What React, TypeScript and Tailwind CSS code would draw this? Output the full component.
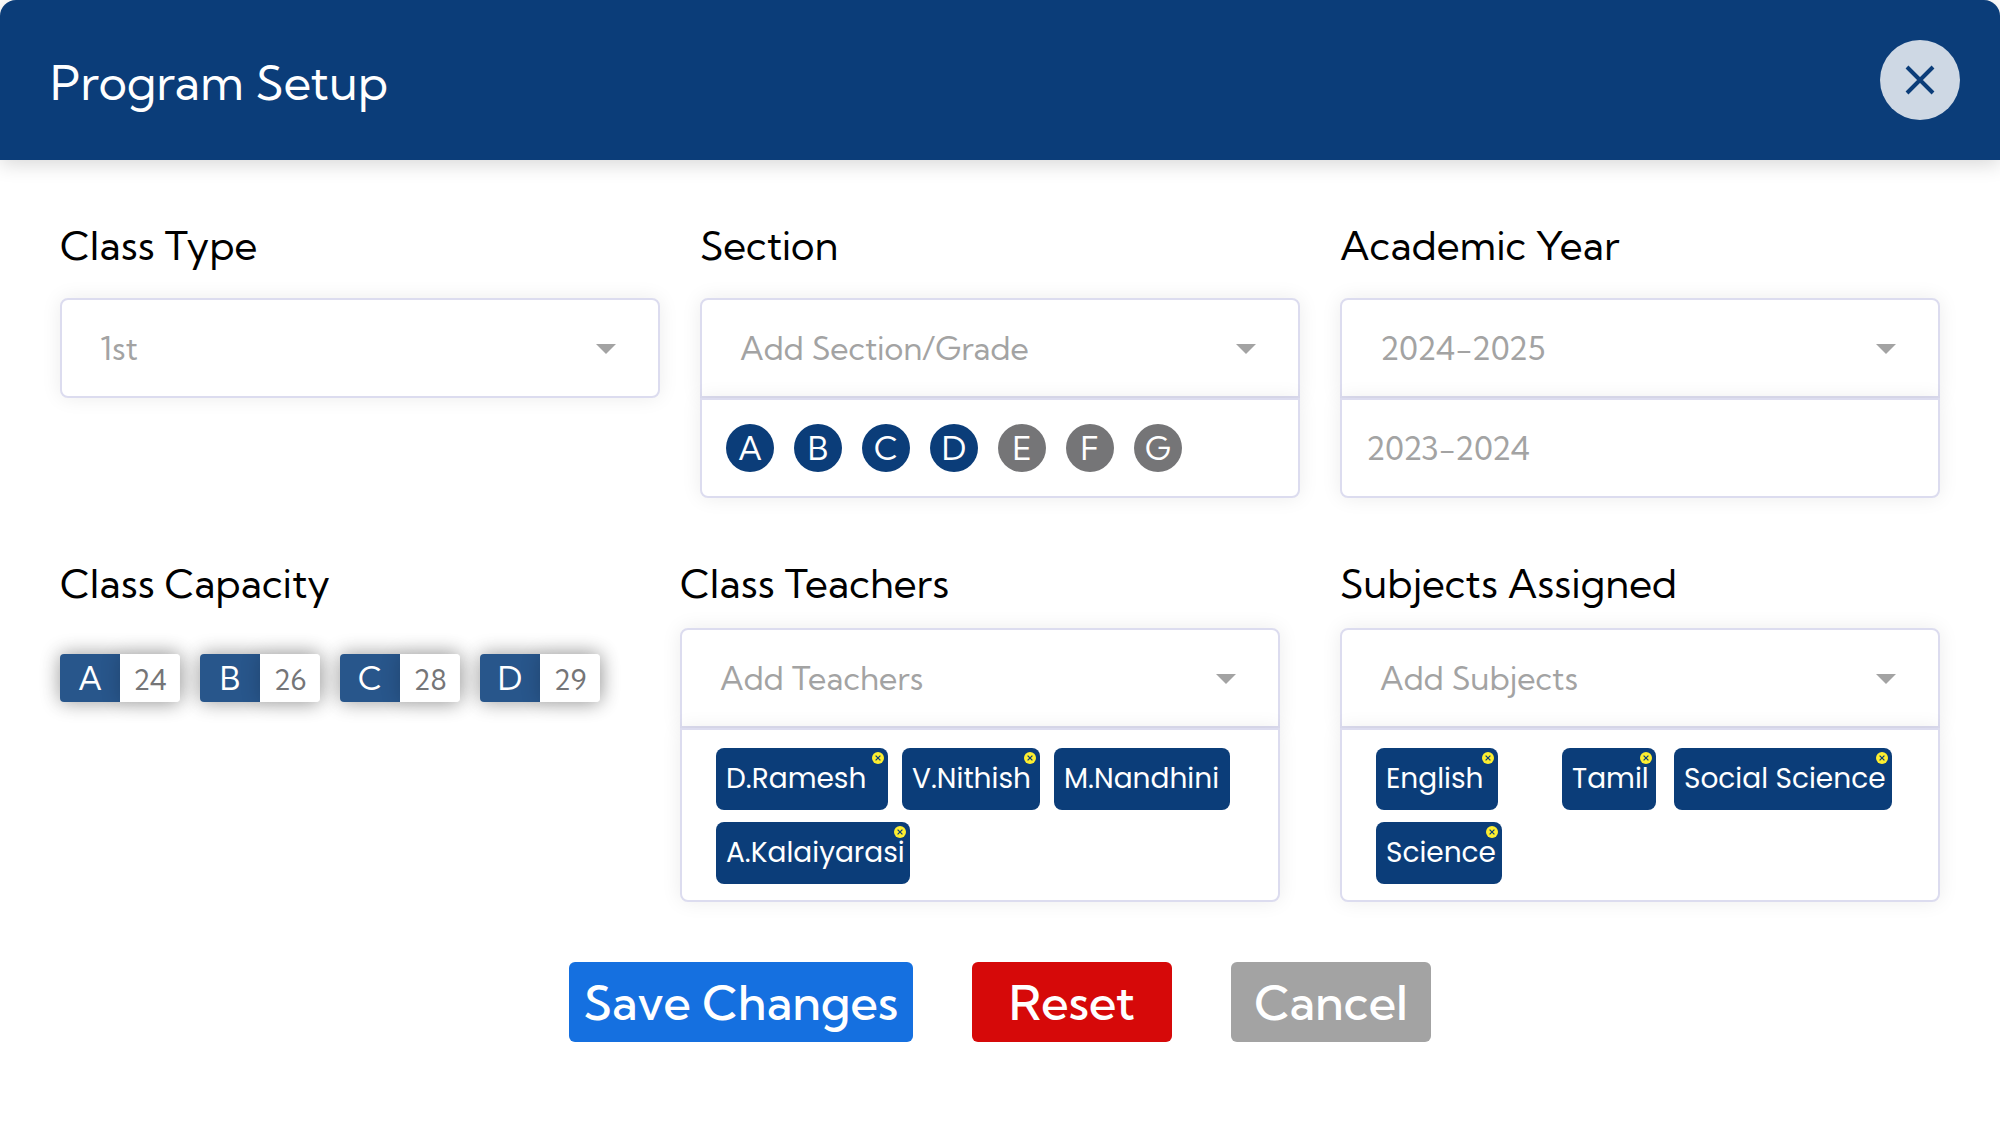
import { useId, type ReactNode } from "react";

const sections = [
  { name: "A", active: true },
  { name: "B", active: true },
  { name: "C", active: true },
  { name: "D", active: true },
  { name: "E", active: false },
  { name: "F", active: false },
  { name: "G", active: false },
];

const capacities = [
  { name: "A", seats: 24 },
  { name: "B", seats: 26 },
  { name: "C", seats: 28 },
  { name: "D", seats: 29 },
];

function Field({
  label,
  value,
  labelGap,
  children,
}: {
  label: string;
  value: string;
  labelGap: string;
  children?: ReactNode;
}) {
  const id = useId();
  return (
    <div>
      <label htmlFor={id} className={`block text-[40px] leading-12 text-black ${labelGap}`}>
        {label}
      </label>
      <div className="relative">
        <select
          id={id}
          className={`block h-[100px] w-full appearance-none border-2 border-[#dcdcef] bg-white pr-20 pl-[38px] text-[32px] text-[#a3a3a3] shadow-[0_0_20px_rgba(0,0,0,0.08)] ${
            children ? "rounded-t-lg" : "rounded-lg"
          }`}
        >
          <option>{value}</option>
        </select>
        <svg
          viewBox="0 0 20 10"
          className="pointer-events-none absolute top-[46px] right-11 h-[10px] w-5 fill-[#a3a3a3]"
          aria-hidden="true"
        >
          <path d="M0 0h20L10 10z" />
        </svg>
      </div>
      {children && (
        <div className="relative rounded-b-lg border-2 border-[#dcdcef] bg-white shadow-[0_0_20px_rgba(0,0,0,0.08)]">
          {children}
        </div>
      )}
    </div>
  );
}

function Chip({ name, width, removable = true }: { name: string; width: string; removable?: boolean }) {
  return (
    <li
      className={`relative flex h-[62px] items-center rounded-lg bg-[#0b3d79] pl-[10px] text-[28px] whitespace-nowrap text-white ${width}`}
    >
      <span className="font-['Poppins',Inter,sans-serif]">{name}</span>
      {removable && (
        <button type="button" aria-label={`Remove ${name}`} className="absolute top-1 right-1 size-3">
          <svg viewBox="0 0 12 12" className="size-3" aria-hidden="true">
            <circle cx="6" cy="6" r="6" fill="#fdee30" />
            <path d="M3.6 3.6l4.8 4.8M8.4 3.6L3.6 8.4" stroke="#0b3d79" strokeWidth="1.2" />
          </svg>
        </button>
      )}
    </li>
  );
}

export default function App() {
  return (
    <div className="min-h-screen bg-white font-['Kumbh_Sans',Lato,sans-serif]">
      <header className="flex h-40 items-center justify-between rounded-t-2xl bg-[#0b3d79] pr-10 pl-[50px] shadow-[0_4px_20px_rgba(0,0,0,0.16)]">
        <h1 className="pt-[6px] text-5xl leading-14 text-white">Program Setup</h1>
        <button
          type="button"
          aria-label="Close"
          className="flex size-20 items-center justify-center rounded-full bg-[#ced8e4]"
        >
          <svg viewBox="0 0 30 30" className="size-[30px]" aria-hidden="true">
            <path d="M2 2l26 26M28 2L2 28" stroke="#0b3d79" strokeWidth="4" />
          </svg>
        </button>
      </header>

      <form className="px-[60px] pt-[62px]" onSubmit={(e) => e.preventDefault()}>
        <div className="grid grid-cols-3 gap-10">
          <Field label="Class Type" value="1st" labelGap="mb-7" />
          <Field label="Section" value="Add Section/Grade" labelGap="mb-7">
            <div className="flex h-24 items-center gap-5 px-6">
              {sections.map((s) => (
                <button
                  key={s.name}
                  type="button"
                  aria-pressed={s.active}
                  className={`size-12 rounded-full text-[32px] leading-12 text-white ${
                    s.active ? "bg-[#0b3d79]" : "bg-[#757577]"
                  }`}
                >
                  {s.name}
                </button>
              ))}
            </div>
          </Field>
          <Field label="Academic Year" value="2024-2025" labelGap="mb-7">
            <button type="button" className="block h-24 w-full px-6 text-left text-[32px] text-[#a3a3a3]">
              2023-2024
            </button>
          </Field>
        </div>

        <div className="mt-[62px] flex">
          <section className="mr-5 flex-1">
            <h2 className="text-[40px] leading-12 text-black">Class Capacity</h2>
            <ul className="mt-[46px] flex gap-5">
              {capacities.map((c) => (
                <li
                  key={c.name}
                  className="flex h-12 w-[120px] rounded text-center shadow-[0_0_20px_rgba(0,0,0,0.3)]"
                >
                  <span className="flex-1 rounded-l bg-[#28568b] text-[32px] leading-12 text-white shadow-[0_0_20px_rgba(0,0,0,0.12)]">
                    {c.name}
                  </span>
                  <span className="flex-1 rounded-r bg-white text-[28px] leading-[52px] text-[#757577] shadow-[0_0_20px_rgba(0,0,0,0.2)]">
                    {c.seats}
                  </span>
                </li>
              ))}
            </ul>
          </section>
          <div className="mr-[60px] flex-1">
            <Field label="Class Teachers" value="Add Teachers" labelGap="mb-5">
              <ul className="flex flex-wrap gap-x-[14px] gap-y-3 px-[34px] pt-[18px] pb-4">
                <Chip name="D.Ramesh" width="w-[172px]" />
                <Chip name="V.Nithish" width="w-[138px]" />
                <Chip name="M.Nandhini" width="w-[176px]" removable={false} />
                <Chip name="A.Kalaiyarasi" width="w-[194px]" />
              </ul>
            </Field>
          </div>
          <div className="flex-1">
            <Field label="Subjects Assigned" value="Add Subjects" labelGap="mb-5">
              <ul className="flex flex-wrap gap-x-[18px] gap-y-3 px-[34px] pt-[18px] pb-4">
                <Chip name="English" width="mr-[46px] w-[122px]" />
                <Chip name="Tamil" width="w-[94px]" />
                <Chip name="Social Science" width="w-[218px]" />
                <Chip name="Science" width="w-[126px]" />
              </ul>
            </Field>
          </div>
        </div>

        <div className="mt-[60px] flex justify-center gap-[59px] text-5xl font-medium text-white">
          <button type="submit" className="h-20 w-[344px] rounded-md bg-[#1570e0] pt-[2px]">
            Save Changes
          </button>
          <button type="reset" className="h-20 w-[200px] rounded-md bg-[#d60909] pt-[2px]">
            Reset
          </button>
          <button type="button" className="h-20 w-[200px] rounded-md bg-[#a3a3a3] pt-[2px]">
            Cancel
          </button>
        </div>
      </form>
    </div>
  );
}
